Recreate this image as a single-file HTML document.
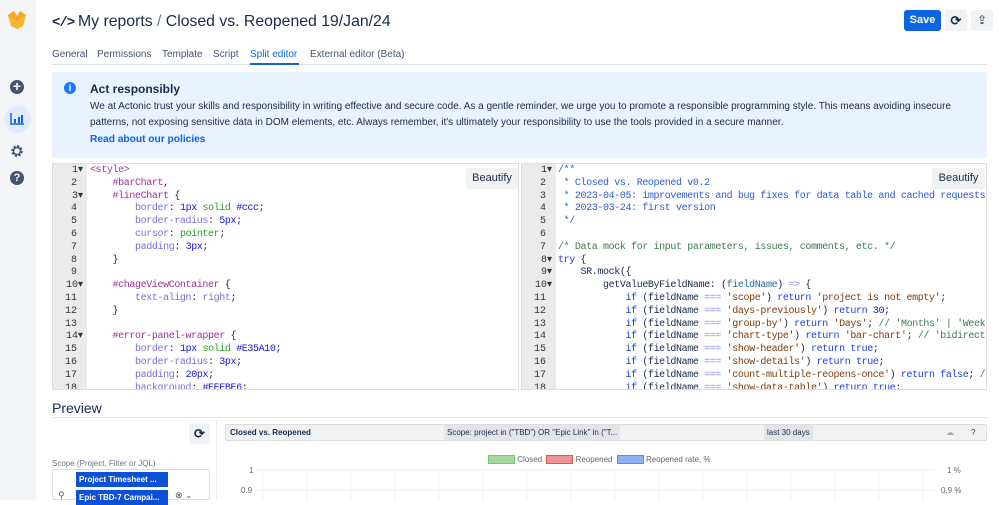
<!DOCTYPE html>
<html><head><meta charset="utf-8"><style>
*{box-sizing:border-box;margin:0;padding:0}
body{width:999px;height:500px;overflow:hidden;background:#fff;font-family:"Liberation Sans",sans-serif;color:#172b4d;position:relative}
.abs{position:absolute}
.side{left:0;top:0;width:36px;height:500px;background:#f4f5f7}
.code{font-family:"Liberation Mono",monospace;font-size:10px;letter-spacing:-0.38px;line-height:12.8px;white-space:pre}
.gut{background:#ebebeb;color:#333;text-align:right;padding-right:4px;letter-spacing:0}
.ed{border:1px solid #ddd;overflow:hidden;background:#fff}
.btn{background:#f1f2f4;border-radius:3px;font-size:11px;color:#172b4d;text-align:center}
.p{color:#7b6fd6}.v{color:#2a9a2a}.n{color:#1515e0}.s{color:#993399}.t{color:#a23a8a}
.c{color:#2b5bd9}.g{color:#3c7a52}.k{color:#1a3de0}.st{color:#7d3c0c}.o{color:#8888ff}
</style></head><body>
<div class="abs side"></div>
<svg class="abs" style="left:6px;top:9px" width="22" height="22" viewBox="0 0 22 22"><path d="M2 6 L8 2 L11 7 L14 2 L20 6 L17 17 L11 20 L5 17Z" fill="#f5a623"/><path d="M2 6 L11 12 L20 6 L17 17 L11 20 L5 17Z" fill="#f7b733"/></svg>
<div class="abs" style="left:10px;top:80px;width:14px;height:14px;border-radius:50%;background:#44546f;color:#fff;font-size:14px;line-height:13px;text-align:center;font-weight:bold">+</div>
<div class="abs" style="left:4px;top:106px;width:27px;height:27px;border-radius:50%;background:#e0ebfd"></div>
<svg class="abs" style="left:10px;top:112px" width="15" height="14"><path d="M1 1V12H14" stroke="#0c66e4" stroke-width="1.5" fill="none"/><rect x="4" y="7" width="2" height="4" fill="#0c66e4"/><rect x="8" y="5" width="2" height="6" fill="#0c66e4"/><rect x="11" y="3" width="2" height="8" fill="#0c66e4"/></svg>
<svg class="abs" style="left:10px;top:144px" width="14" height="14" viewBox="0 0 14 14"><circle cx="7" cy="7" r="4.5" fill="none" stroke="#44546f" stroke-width="2.5" stroke-dasharray="2.2 1.3"/><circle cx="7" cy="7" r="3.5" fill="none" stroke="#44546f" stroke-width="1.5"/></svg>
<div class="abs" style="left:10px;top:171px;width:14px;height:14px;border-radius:50%;background:#44546f;color:#fff;font-size:11px;line-height:14px;text-align:center;font-weight:bold">?</div>

<div class="abs" style="left:52px;top:15px;font-family:'Liberation Mono',monospace;font-size:14px;font-weight:bold;letter-spacing:-1px">&lt;/&gt;</div>
<div class="abs" style="left:78px;top:13px;font-size:15.8px;color:#172b4d;white-space:nowrap">My reports <span style="color:#6b778c">/</span> Closed vs. Reopened 19/Jan/24</div>
<div class="abs" style="left:904px;top:10px;width:37px;height:21px;background:#0c66e4;border-radius:3px;color:#fff;font-size:11px;font-weight:bold;text-align:center;line-height:21px">Save</div>
<div class="abs btn" style="left:945px;top:10px;width:22px;height:21px;line-height:21px;font-size:13px;font-weight:bold">⟳</div>
<div class="abs btn" style="left:971px;top:10px;width:22px;height:21px;line-height:20px;font-size:12px">⇪</div>

<div class="abs" style="left:52px;top:49px;font-size:10px;color:#44546f;white-space:nowrap">
<span class="abs" style="left:0">General</span><span class="abs" style="left:45px">Permissions</span><span class="abs" style="left:110px">Template</span><span class="abs" style="left:161px">Script</span><span class="abs" style="left:198px;color:#0c66e4">Split editor</span><span class="abs" style="left:258px">External editor (Beta)</span></div>
<div class="abs" style="left:52px;top:64px;width:935px;height:1px;background:#dfe1e6"></div>
<div class="abs" style="left:250px;top:63px;width:49px;height:2px;background:#0c66e4"></div>

<div class="abs" style="left:52px;top:72px;width:935px;height:86px;background:#e9f2ff;border-radius:3px"></div>
<div class="abs" style="left:64px;top:82px;width:12px;height:12px;border-radius:50%;background:#1d7afc;color:#fff;font-size:9px;line-height:12px;text-align:center;font-weight:bold">i</div>
<div class="abs" style="left:90px;top:82px;font-size:12px;font-weight:bold">Act responsibly</div>
<div class="abs" style="left:90px;top:99px;width:885px;font-size:10px;line-height:16px">We at Actonic trust your skills and responsibility in writing effective and secure code. As a gentle reminder, we urge you to promote a responsible programming style. This means avoiding insecure patterns, not exposing sensitive data in DOM elements, etc. Always remember, it's ultimately your responsibility to use the tools provided in a secure manner.</div>
<div class="abs" style="left:90px;top:134px;font-size:10.2px;color:#0c66e4;font-weight:bold">Read about our policies</div>

<div class="abs ed" style="left:52px;top:163px;width:467px;height:227px">
<div class="abs code gut" style="left:0;top:0;width:34px;height:227px;padding-top:1px">1▾
2 
3▾
4 
5 
6 
7 
8 
9 
10▾
11 
12 
13 
14▾
15 
16 
17 
18 </div>
<div class="abs code" style="left:37px;top:1px"><span class="t">&lt;style&gt;</span>
    <span class="s">#barChart</span>,
    <span class="s">#lineChart</span> {
        <span class="p">border</span>: <span class="n">1px</span> <span class="v">solid</span> <span class="n">#ccc</span>;
        <span class="p">border-radius</span>: <span class="n">5px</span>;
        <span class="p">cursor</span>: <span class="v">pointer</span>;
        <span class="p">padding</span>: <span class="n">3px</span>;
    }

    <span class="s">#chageViewContainer</span> {
        <span class="p">text-align</span>: <span class="p">right</span>;
    }

    <span class="s">#error-panel-wrapper</span> {
        <span class="p">border</span>: <span class="n">1px</span> <span class="v">solid</span> <span class="n">#E35A10</span>;
        <span class="p">border-radius</span>: <span class="n">3px</span>;
        <span class="p">padding</span>: <span class="n">20px</span>;
        <span class="p">background</span>: <span class="n">#EEEBE6</span>;</div>
<div class="abs btn" style="left:413px;top:4px;width:52px;height:21px;line-height:21px">Beautify</div>
</div>

<div class="abs ed" style="left:521px;top:163px;width:466px;height:227px">
<div class="abs code gut" style="left:0;top:0;width:34px;height:227px;padding-top:1px">1▾
2 
3 
4 
5 
6 
7 
8▾
9▾
10▾
11 
12 
13 
14 
15 
16 
17 
18 </div>
<div class="abs code" style="left:36px;top:1px"><span class="c">/**
 * Closed vs. Reopened v0.2
 * 2023-04-05: improvements and bug fixes for data table and cached requests
 * 2023-03-24: first version
 */</span>

<span class="g">/* Data mock for input parameters, issues, comments, etc. */</span>
<span class="k">try</span> {
    SR.mock({
        getValueByFieldName: (<span style="color:#2a6a9a">fieldName</span>) <span class="o">=&gt;</span> {
            <span class="k">if</span> (fieldName <span class="o">===</span> <span class="st">'scope'</span>) <span class="k">return</span> <span class="st">'project is not empty'</span>;
            <span class="k">if</span> (fieldName <span class="o">===</span> <span class="st">'days-previously'</span>) <span class="k">return</span> <span class="n">30</span>;
            <span class="k">if</span> (fieldName <span class="o">===</span> <span class="st">'group-by'</span>) <span class="k">return</span> <span class="st">'Days'</span>; <span class="g">// 'Months' | 'Weeks'</span>
            <span class="k">if</span> (fieldName <span class="o">===</span> <span class="st">'chart-type'</span>) <span class="k">return</span> <span class="st">'bar-chart'</span>; <span class="g">// 'bidirectional'</span>
            <span class="k">if</span> (fieldName <span class="o">===</span> <span class="st">'show-header'</span>) <span class="k">return</span> <span class="k">true</span>;
            <span class="k">if</span> (fieldName <span class="o">===</span> <span class="st">'show-details'</span>) <span class="k">return</span> <span class="k">true</span>;
            <span class="k">if</span> (fieldName <span class="o">===</span> <span class="st">'count-multiple-reopens-once'</span>) <span class="k">return</span> <span class="k">false</span>; <span class="g">// x</span>
            <span class="k">if</span> (fieldName <span class="o">===</span> <span class="st">'show-data-table'</span>) <span class="k">return</span> <span class="k">true</span>;</div>
<div class="abs btn" style="left:410px;top:4px;width:53px;height:21px;line-height:21px">Beautify</div>
</div>

<div class="abs" style="left:52px;top:400px;font-size:14px;color:#172b4d">Preview</div>
<div class="abs" style="left:52px;top:417px;width:935px;height:1px;background:#e6e6e6"></div>
<div class="abs btn" style="left:189px;top:423px;width:21px;height:21px;line-height:21px;font-size:13px;font-weight:bold">⟳</div>
<div class="abs" style="left:216px;top:420px;width:1px;height:80px;background:#eee"></div>
<div class="abs" style="left:225px;top:424px;width:762px;height:17px;background:#f1f2f4;border:1px solid #ddd;border-radius:2px;font-size:8px;line-height:15px;white-space:nowrap">
<span class="abs" style="left:4px;font-weight:bold">Closed vs. Reopened</span>
<span class="abs" style="left:218px;background:#e4e5e8;padding:0 3px">Scope: project in ("TBD") OR "Epic Link" in ("T...</span>
<span class="abs" style="left:538px;background:#e4e5e8;padding:0 3px">last 30 days</span>
<span class="abs" style="left:720px;color:#aaa">☁</span><span class="abs" style="left:745px">?</span></div>
<div class="abs" style="left:488px;top:455px;font-size:8px;color:#666;white-space:nowrap;line-height:10px">
<span style="display:inline-block;width:27px;height:9px;background:#a5d8a0;border:1px solid #6c6;vertical-align:middle"></span> Closed
<span style="display:inline-block;width:27px;height:9px;background:#f09090;border:1px solid #d55;vertical-align:middle;margin-left:2px"></span> Reopened
<span style="display:inline-block;width:27px;height:9px;background:#8fb0f5;border:1px solid #58f;vertical-align:middle;margin-left:2px"></span> Reopened rate, %</div>
<svg class="abs" style="left:225px;top:462px" width="774" height="38">
<g stroke="#ebebeb" stroke-width="1">
<line x1="30" y1="8" x2="710" y2="8"/><line x1="30" y1="28" x2="710" y2="28"/>
</g>
<g stroke="#f0f0f0"><line x1="38" y1="8" x2="38" y2="38"/><line x1="82" y1="8" x2="82" y2="38"/><line x1="126" y1="8" x2="126" y2="38"/><line x1="170" y1="8" x2="170" y2="38"/><line x1="214" y1="8" x2="214" y2="38"/><line x1="258" y1="8" x2="258" y2="38"/><line x1="302" y1="8" x2="302" y2="38"/><line x1="346" y1="8" x2="346" y2="38"/><line x1="390" y1="8" x2="390" y2="38"/><line x1="434" y1="8" x2="434" y2="38"/><line x1="478" y1="8" x2="478" y2="38"/><line x1="522" y1="8" x2="522" y2="38"/><line x1="566" y1="8" x2="566" y2="38"/><line x1="610" y1="8" x2="610" y2="38"/><line x1="654" y1="8" x2="654" y2="38"/><line x1="698" y1="8" x2="698" y2="38"/></g>
<g font-family="Liberation Sans" font-size="8" fill="#666"><text x="24" y="11">1</text><text x="16" y="31">0.9</text><text x="722" y="11">1 %</text><text x="716" y="31">0.9 %</text></g>
</svg>
<div class="abs" style="left:52px;top:459px;font-size:8px;color:#6b778c">Scope (Project, Filter or JQL)</div>
<div class="abs" style="left:52px;top:469px;width:158px;height:31px;border:1px solid #ddd;border-radius:2px"></div>
<div class="abs" style="left:76px;top:472px;width:92px;height:15px;background:#0c50d6;color:#fff;font-size:8px;font-weight:bold;line-height:15px;padding-left:3px">Project Timesheet ...</div>
<div class="abs" style="left:76px;top:490px;width:92px;height:15px;background:#0c50d6;color:#fff;font-size:8px;font-weight:bold;line-height:15px;padding-left:3px">Epic TBD-7 Campai...</div>
<div class="abs" style="left:58px;top:490px;font-size:9px;color:#555">⚲</div>
<div class="abs" style="left:175px;top:490px;font-size:9px;color:#555">⊗ ⌄</div>
</body></html>
